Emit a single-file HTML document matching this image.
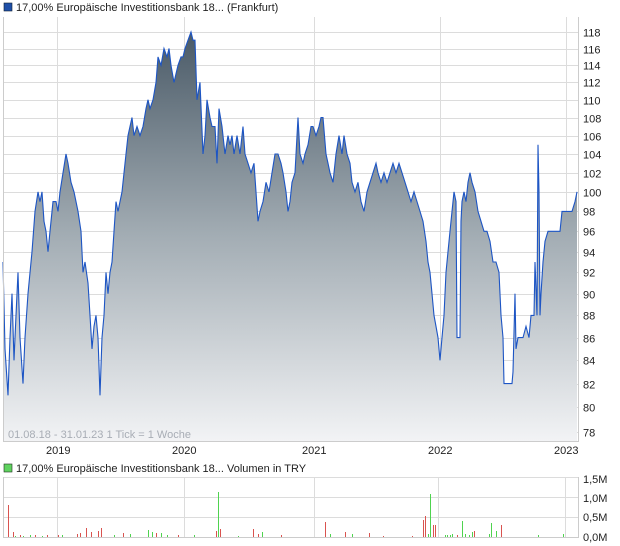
<!DOCTYPE html>
<html><head><meta charset="utf-8"><style>
body{margin:0;width:620px;height:546px;background:#fff;overflow:hidden;font-family:"Liberation Sans",sans-serif}
svg{position:absolute;left:0;top:0}
text{font-family:"Liberation Sans",sans-serif;font-size:11px;fill:#222}
</style></head><body>
<svg id="s" width="620" height="546" xmlns="http://www.w3.org/2000/svg">
<defs><linearGradient id="g" gradientUnits="userSpaceOnUse" x1="0" y1="32" x2="0" y2="441">
<stop offset="0" stop-color="#4a5a67"/><stop offset="0.5" stop-color="#a3adb4"/><stop offset="1" stop-color="#f2f3f5"/></linearGradient></defs>
<rect x="4" y="3" width="8" height="8" fill="#1f4fa8" stroke="#123" stroke-width="0.6"/>
<text x="16" y="11">17,00% Europäische Investitionsbank 18... (Frankfurt)</text>
<g id="grid" stroke="#dcdcdc" stroke-width="1"></g>
<path id="area" fill="url(#g)"/>
<path id="line" fill="none" stroke="#1d55c4" stroke-width="1.1"/>
<g id="ylab"></g>
<line x1="3.5" y1="17" x2="3.5" y2="441" stroke="#ccc"/>
<line x1="3" y1="441.5" x2="579" y2="441.5" stroke="#ccc"/>
<line x1="578.5" y1="17" x2="578.5" y2="441" stroke="#ccc"/>
<text x="8" y="438" style="fill:#a8adb5">01.08.18 - 31.01.23   1 Tick = 1 Woche</text>
<text x="46" y="454">2019</text><text x="172" y="454">2020</text><text x="302" y="454">2021</text><text x="428" y="454">2022</text><text x="554" y="454">2023</text>
<rect x="4" y="464" width="8" height="8" fill="#5fd35f" stroke="#232" stroke-width="0.6"/>
<text x="16" y="472">17,00% Europäische Investitionsbank 18... Volumen in TRY</text>
<g stroke="#dcdcdc"><line x1="3" y1="477.5" x2="578" y2="477.5"/><line x1="3" y1="497.5" x2="578" y2="497.5"/><line x1="3" y1="517.5" x2="578" y2="517.5"/><line x1="57.5" y1="477" x2="57.5" y2="537"/><line x1="184.5" y1="477" x2="184.5" y2="537"/><line x1="314.5" y1="477" x2="314.5" y2="537"/><line x1="438.5" y1="477" x2="438.5" y2="537"/><line x1="565.5" y1="477" x2="565.5" y2="537"/></g>
<line x1="3.5" y1="477" x2="3.5" y2="538" stroke="#ccc"/>
<line x1="3" y1="537.5" x2="579" y2="537.5" stroke="#ccc"/>
<line x1="578.5" y1="477" x2="578.5" y2="538" stroke="#ccc"/>
<text x="583" y="483">1,5M</text><text x="583" y="502">1,0M</text><text x="583" y="521">0,5M</text><text x="583" y="541">0,0M</text>
<g id="vol" stroke-width="1"></g>
</svg>
<script>
var NS="http://www.w3.org/2000/svg";
function Y(v){return 32+966*(Math.log(118)-Math.log(v));}
var grid=document.getElementById('grid'),yl=document.getElementById('ylab');
for(var v=78;v<=118;v+=2){var y=Math.round(Y(v))+0.5;var l=document.createElementNS(NS,'line');l.setAttribute('x1',3);l.setAttribute('x2',578);l.setAttribute('y1',y);l.setAttribute('y2',y);grid.appendChild(l);
var t=document.createElementNS(NS,'text');t.setAttribute('x',583);t.setAttribute('y',y+4);t.textContent=v;yl.appendChild(t);}
[57,184,314,440,566].forEach(function(x){var l=document.createElementNS(NS,'line');l.setAttribute('x1',x+.5);l.setAttribute('x2',x+.5);l.setAttribute('y1',17);l.setAttribute('y2',441);grid.appendChild(l);});
var d=[3,93,5,85,8,81,10,86,12,90,14,84,16,88,18,92,20,86,23,82,25,86,28,90,32,94,35,98,38,100,40,99,42,100,44,97,46,96,48,94,50,96,53,99,56,99,58,98,60,100,63,102,66,104,68,103,71,101,74,100,78,98,81,96,83,92,85,93,88,91,90,88,92,85,94,87,96,88,98,86,100,81,102,86,104,88,106,92,108,90,110,92,112,93,114,96,116,99,118,98,120,99,122,100,124,102,126,104,128,106,130,107,132,108,134,106,137,107,140,106,143,107,146,109,148,110,150,109,153,110,156,112,158,115,161,114,164,116,167,115,169,116,171,114,174,112,176,113,178,114,181,115,183,115,185,116,188,117,191,118,193,117,195,117,197,110,200,112,203,104,205,106,207,110,210,108,212,107,215,107,217,103,219,109,222,107,225,104,228,106,230,105,232,106,234,104,237,106,240,104,243,107,245,104,248,103,251,102,254,103,256,100,258,97,260,98,263,99,266,101,269,100,272,102,275,104,278,104,281,103,283,102,286,100,288,98,290,99,292,101,295,102,298,108,300,104,303,103,305,104,308,105,311,107,313,107,316,106,319,107,321,108,323,108,326,104,328,103,330,102,333,101,336,104,339,106,342,104,344,106,347,104,350,103,352,101,355,100,358,101,361,99,364,98,367,100,370,101,373,102,376,103,378,102,381,101,384,102,387,101,390,102,393,103,396,102,399,103,402,102,405,101,408,100,411,99,414,100,417,99,420,98,423,97,426,95,428,93,430,92,432,90,434,88,436,87,438,86,440,84,442,86,444,88,446,92,448,94,450,96,452,98,454,100,456,99,457,86,460,86,461,97,462,99,464,100,466,99,468,101,470,102,472,101,475,100,478,98,481,97,484,96,487,96,490,95,493,93,496,93,499,92,501,88,503,86,504,82,512,82,513,83,515,90,516,85,518,86,523,86,526,87,529,86,531,88,534,88,535,93,537,88,538,105,539,100,540,88,541,90,543,93,545,95,548,96,560,96,562,98,566,98,568,98,572,98,575,99,577,100];
var p='';for(var i=0;i<d.length;i+=2){p+=(i?'L':'M')+d[i]+' '+Y(d[i+1]).toFixed(1);}
document.getElementById('line').setAttribute('d',p);
document.getElementById('area').setAttribute('d',p+'L577 441L3 441Z');
var vb=[[8,505,'r'],[13,532,'r'],[15,536,'g'],[20,535,'r'],[23,536,'g'],[30,535,'g'],[35,535,'r'],[42,536,'g'],[47,535,'r'],[58,535,'r'],[62,535,'g'],[77,534,'r'],[80,533,'r'],[86,528,'r'],[91,532,'r'],[98,531,'r'],[101,528,'r'],[114,535,'g'],[123,533,'r'],[130,534,'g'],[148,530,'g'],[152,532,'g'],[156,533,'r'],[161,533,'g'],[167,535,'g'],[178,535,'r'],[194,535,'g'],[216,531,'r'],[218,492,'g'],[220,529,'r'],[238,536,'g'],[253,529,'r'],[258,534,'r'],[262,532,'g'],[281,535,'r'],[325,522,'r'],[330,534,'g'],[345,532,'r'],[352,534,'g'],[369,533,'r'],[383,536,'r'],[412,536,'r'],[423,520,'r'],[425,516,'r'],[428,534,'g'],[430,494,'g'],[433,525,'r'],[435,525,'r'],[445,535,'g'],[447,535,'g'],[450,535,'g'],[452,534,'g'],[457,535,'r'],[462,521,'g'],[465,534,'g'],[469,535,'g'],[472,532,'g'],[474,531,'r'],[489,534,'g'],[491,523,'g'],[496,531,'g'],[501,525,'r'],[538,535,'g'],[563,534,'g']];
var vg=document.getElementById('vol');
vb.forEach(function(b){var l=document.createElementNS(NS,'line');l.setAttribute('x1',b[0]+.5);l.setAttribute('x2',b[0]+.5);l.setAttribute('y1',b[1]);l.setAttribute('y2',537);l.setAttribute('stroke',b[2]=='r'?'#d9534f':'#4fd34f');vg.appendChild(l);});
</script>
</body></html>
